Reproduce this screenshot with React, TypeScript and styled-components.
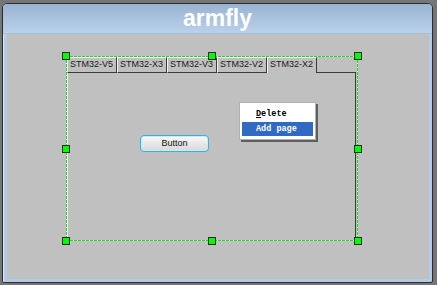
import React from "react";
import styled, { createGlobalStyle } from "styled-components";

const Global = createGlobalStyle`
  html, body { margin: 0; padding: 0; }
  body {
    width: 437px;
    height: 285px;
    overflow: hidden;
    background: #767676;
    font-family: "Liberation Sans", Arial, sans-serif;
  }
`;

const Window = styled.div`
  margin: 3px 0 0 2px;
  width: 431px;
  height: 280px;
  box-sizing: border-box;
  border: 1px solid #2c2c2c;
  border-radius: 5px 5px 2px 2px;
  overflow: hidden;
  display: flex;
  flex-direction: column;
  background: #b3cbe6;
`;

const TitleBar = styled.div`
  height: 29px;
  flex: none;
  border-bottom: 1px solid #a6bfdb;
  background: linear-gradient(#98b3d2, #bad1ea);
  color: #fff;
  font-weight: bold;
  font-size: 23px;
  line-height: 29px;
  text-align: center;
`;

const Frame = styled.div`
  flex: 1;
  display: flex;
  padding: 0 3px 3px 3px;
  border-left: 1px solid #d8e6f4;
`;

const Client = styled.div`
  flex: 1;
  position: relative;
  background: #c0c0c0;
  padding: 22px 0 0 59px;
`;

const Selection = styled.div`
  position: relative;
  width: 292px;
  height: 185px;
  box-sizing: border-box;
  display: flex;
  flex-direction: column;
  &::after {
    content: "";
    position: absolute;
    inset: 0;
    pointer-events: none;
    background:
      repeating-linear-gradient(90deg, #18e018 0 3px, #eaffea 3px 4px) left top / 100% 1px no-repeat,
      repeating-linear-gradient(90deg, #18e018 0 3px, #eaffea 3px 4px) left bottom / 100% 1px no-repeat,
      repeating-linear-gradient(180deg, #18e018 0 3px, #eaffea 3px 4px) left top / 1px 100% no-repeat,
      repeating-linear-gradient(180deg, #18e018 0 3px, #eaffea 3px 4px) right top / 1px 100% no-repeat;
  }
`;

const Handle = styled.div<{ $x: "l" | "c" | "r"; $y: "t" | "m" | "b" }>`
  position: absolute;
  z-index: 2;
  width: 6px;
  height: 6px;
  background: #00ff00;
  border: 1px solid #2a2a2a;
  left: ${(p) => (p.$x === "l" ? "-4px" : p.$x === "c" ? "calc(50% - 4px)" : "calc(100% - 4px)")};
  top: ${(p) => (p.$y === "t" ? "-4px" : p.$y === "m" ? "calc(50% - 4px)" : "calc(100% - 4px)")};
`;

const TabRow = styled.div`
  display: flex;
  height: 16px;
  margin-top: 1px;
  padding-left: 1px;
  flex: none;
`;

const Tab = styled.div<{ $active?: boolean }>`
  box-sizing: border-box;
  height: 16px;
  padding: 0 3px 0 2px;
  background: #c0c0c0;
  border-top: 1px solid #f4f4f4;
  border-left: 1px solid #f4f4f4;
  border-right: 1px solid #3a3a3a;
  border-bottom: ${(p) => (p.$active ? "none" : "1px solid #3a3a3a")};
  font-size: 9px;
  line-height: 13px;
  color: #1a1a1a;
  white-space: nowrap;
`;

const TabFill = styled.div`
  flex: 1;
  margin-top: 1px;
  margin-right: 2px;
  border-bottom: 1px solid #3a3a3a;
`;

const PageBody = styled.div`
  flex: 1;
  margin: 0 2px 0 1px;
  border-right: 1px solid #3a3a3a;
  border-bottom: 1px solid #505050;
  border-left: 1px solid #f4f4f4;
  padding: 62px 0 0 72px;
`;

const Button = styled.div`
  width: 69px;
  height: 17px;
  box-sizing: border-box;
  border: 1px solid #3ab1dc;
  border-radius: 4px;
  background: linear-gradient(#fbfbfb, #e6e6e6 55%, #d9d9d9);
  box-shadow: inset 0 0 0 1px #c6ecf8;
  font-size: 9px;
  line-height: 15px;
  text-align: center;
  color: #111;
`;

const Menu = styled.div`
  position: absolute;
  left: 232px;
  top: 68px;
  width: 77px;
  box-sizing: border-box;
  padding: 3px 2px;
  background: #fff;
  border: 1px solid #b0b0b0;
  box-shadow: 2px 2px 0 #606060;
  font-family: "Liberation Mono", "Courier New", monospace;
  font-size: 8.5px;
  font-weight: bold;
`;

const MenuItem = styled.div<{ $hot?: boolean }>`
  height: ${(p) => (p.$hot ? "14px" : "16px")};
  line-height: ${(p) => (p.$hot ? "14px" : "16px")};
  padding-left: 14px;
  color: ${(p) => (p.$hot ? "#fff" : "#000")};
  background: ${(p) => (p.$hot ? "#316ac5" : "transparent")};
  & u { text-decoration: underline; }
`;

const tabs = ["STM32-V5", "STM32-X3", "STM32-V3", "STM32-V2", "STM32-X2"];

export default function App() {
  return (
    <>
      <Global />
      <Window>
        <TitleBar>armfly</TitleBar>
        <Frame>
          <Client>
            <Selection>
              <TabRow>
                {tabs.map((t, i) => (
                  <Tab key={t} $active={i === tabs.length - 1}>
                    {t}
                  </Tab>
                ))}
                <TabFill />
              </TabRow>
              <PageBody>
                <Button>Button</Button>
              </PageBody>
              <Handle $x="l" $y="t" />
              <Handle $x="c" $y="t" />
              <Handle $x="r" $y="t" />
              <Handle $x="l" $y="m" />
              <Handle $x="r" $y="m" />
              <Handle $x="l" $y="b" />
              <Handle $x="c" $y="b" />
              <Handle $x="r" $y="b" />
            </Selection>
            <Menu>
              <MenuItem>
                <u>D</u>elete
              </MenuItem>
              <MenuItem $hot>Add page</MenuItem>
            </Menu>
          </Client>
        </Frame>
      </Window>
    </>
  );
}
